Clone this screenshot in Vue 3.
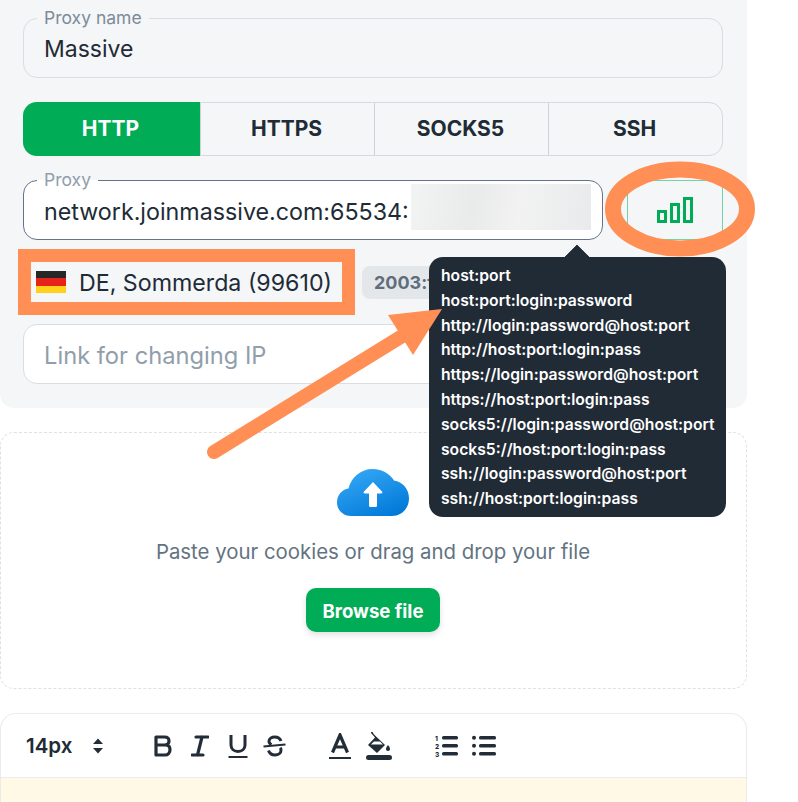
<script setup>
const tabs = ['HTTP', 'HTTPS', 'SOCKS5', 'SSH']
const formats = [
  'host:port',
  'host:port:login:password',
  'http://login:password@host:port',
  'http://host:port:login:pass',
  'https://login:password@host:port',
  'https://host:port:login:pass',
  'socks5://login:password@host:port',
  'socks5://host:port:login:pass',
  'ssh://login:password@host:port',
  'ssh://host:port:login:pass',
]
</script>

<template>
  <div class="page">
    <section class="panel">
      <div class="field name-field">
        <span class="legend">Proxy name</span>
        <span class="value">Massive</span>
      </div>

      <div class="tabs">
        <button v-for="(t, i) in tabs" :key="t" class="tab" :class="{ active: i === 0 }">{{ t }}</button>
      </div>

      <div class="proxy-row">
        <div class="field proxy-field">
          <span class="legend">Proxy</span>
          <span class="value">network.joinmassive.com:65534:</span>
          <span class="blurred"></span>
        </div>
        <button class="check-btn" aria-label="Check proxy">
          <svg width="38" height="28" viewBox="0 0 38 28" fill="none" stroke="#00ad56" stroke-width="3">
            <rect x="1.500" y="14.500" width="7" height="10" />
            <rect x="14.500" y="7.500" width="7" height="17" />
            <rect x="27.500" y="1.500" width="7" height="23" />
          </svg>
        </button>
      </div>

      <div class="location-row">
        <div class="location">
          <span class="flag"><i class="black"></i><i class="red"></i><i class="gold"></i></span>
          <span class="place">DE, Sommerda (99610)</span>
        </div>
        <span class="chip">2003:fa:7f2e:11c0</span>
      </div>

      <div class="field link-field">
        <span class="placeholder">Link for changing IP</span>
      </div>
    </section>

    <section class="dropzone">
      <svg class="cloud" width="72" height="47" viewBox="0 0 72 47">
        <defs>
          <linearGradient id="cloudFill" x1="0.2" y1="0" x2="0.8" y2="1">
            <stop offset="0" stop-color="#35a8f5" />
            <stop offset="1" stop-color="#0078d8" />
          </linearGradient>
        </defs>
        <path fill="url(#cloudFill)" d="M14 47C6 47 0 41 0 33.500C0 26 5 20.500 11.500 19.500C14.500 8 24 0 35.500 0C45.500 0 53.500 5.500 57 11.500C65.500 12.500 72 20 72 29.500C72 39.500 64.500 47 55 47Z" />
        <path fill="#fff" d="M36 13L45 22.500C45.800 23.500 45.300 24.500 44 24.500H40V36.500C40 37.500 39.300 38 38.500 38H33.500C32.700 38 32 37.500 32 36.500V24.500H28C26.700 24.500 26.200 23.500 27 22.500Z" />
      </svg>
      <p class="drop-text">Paste your cookies or drag and drop your file</p>
      <button class="browse">Browse file</button>
    </section>

    <section class="editor">
      <div class="toolbar">
        <div class="size">
          <span>14px</span>
          <svg width="12" height="16" viewBox="0 0 12 16" fill="#232d38">
            <path d="M6 0.500L11 6H1ZM6 15.500L1 10H11Z" />
          </svg>
        </div>
        <div class="group g-format">
          <svg width="18" height="22" viewBox="0 0 18 22" fill="none" stroke="#232d38" stroke-width="3.200" stroke-linejoin="round">
            <path d="M2 2H10.500C13.500 2 15 3.800 15 6C15 8.300 13.500 10 10.500 10H2ZM2 10H11.500C14.500 10 16 12 16 14.500C16 17.500 14.200 20 11 20H2Z" />
          </svg>
          <svg width="18" height="22" viewBox="0 0 18 22" fill="none" stroke="#232d38" stroke-width="3.200" stroke-linecap="round">
            <path d="M5 2H17M1 20H12M11 2L6.500 20" />
          </svg>
          <svg width="20" height="24" viewBox="0 0 20 24" fill="none" stroke="#232d38">
            <path stroke-width="3" d="M3 1V11C3 15 6 17.500 10 17.500C14 17.500 17 15 17 11V1" />
            <path stroke-width="2" d="M0.500 23H19.500" />
          </svg>
          <svg class="strike" width="23" height="22" viewBox="0 0 23 22" fill="none" stroke="#232d38">
            <path stroke-width="3" d="M18 6C17 3.500 14.800 2 11.800 2C8.500 2 6 3.600 6 6.300C6 8 7 9 8.500 9.700M5.500 15.500C6.500 18.500 9 20 12 20C15.500 20 18 18 18 15.200C18 14.200 17.700 13.400 17.200 12.800" />
            <path stroke-width="2" d="M0.500 11.500L22.500 9.500" />
          </svg>
        </div>
        <div class="group g-color">
          <svg width="22" height="26" viewBox="0 0 22 26" fill="none" stroke="#232d38">
            <path stroke-width="3.200" d="M3.500 19.500L11 2L18.500 19.500M6 14H16" />
            <path stroke-width="2" d="M0 25H22" />
          </svg>
          <svg width="26" height="28" viewBox="0 0 26 28" fill="#232d38">
            <path d="M5 0L6.500 0L8 2.500L19 13L11 21L2 13L9 5.500L5 1ZM4.800 12.500H17L14 9.500H8Z" fill-rule="evenodd" />
            <path d="M22 13C23.500 15 24 16 24 17C24 18.300 23.200 19 22 19C20.800 19 20 18.300 20 17C20 16 20.500 15 22 13Z" />
            <rect x="0" y="23" width="26" height="5" rx="2.500" />
          </svg>
        </div>
        <div class="group g-list">
          <svg width="23" height="24" viewBox="0 0 23 24" fill="#232d38">
            <text x="0" y="7" class="num">1</text>
            <text x="0" y="15" class="num">2</text>
            <text x="0" y="23" class="num">3</text>
            <rect x="7" y="2" width="16" height="3.500" rx="1.500" />
            <rect x="7" y="10" width="16" height="3.500" rx="1.500" />
            <rect x="7" y="18" width="16" height="3.500" rx="1.500" />
          </svg>
          <svg width="24" height="24" viewBox="0 0 24 24" fill="#232d38">
            <circle cx="2" cy="3.700" r="2" />
            <circle cx="2" cy="11.700" r="2" />
            <circle cx="2" cy="19.700" r="2" />
            <rect x="7" y="2" width="17" height="3.500" rx="1.500" />
            <rect x="7" y="10" width="17" height="3.500" rx="1.500" />
            <rect x="7" y="18" width="17" height="3.500" rx="1.500" />
          </svg>
        </div>
      </div>
      <div class="editor-body"></div>
    </section>

    <div class="tooltip">
      <div v-for="f in formats" :key="f" class="format">{{ f }}</div>
    </div>

    <svg class="annotations" width="798" height="802" viewBox="0 0 798 802" fill="none">
      <ellipse cx="680" cy="209" rx="67" ry="39.500" stroke="#ff8f54" stroke-width="16" />
      <rect x="24.500" y="255.500" width="324" height="53" stroke="#ff8f54" stroke-width="13" />
      <path d="M214 452L412 330" stroke="#ff8f54" stroke-width="14" stroke-linecap="round" />
      <path d="M388 315L442 309L413 355Z" fill="#ff8f54" />
    </svg>
  </div>
</template>

<style>
html, body { margin: 0; background: #fff; }
</style>

<style scoped>
.page {
  position: relative;
  width: 798px;
  height: 802px;
  overflow: hidden;
  background: #fff;
  font-family: Inter, "Liberation Sans", sans-serif;
  color: #212b36;
}
.panel {
  box-sizing: border-box;
  width: 747px;
  height: 408px;
  padding: 18px 24px 0 23px;
  background: #f4f6f8;
  border-radius: 0 0 14px 14px;
}
.field {
  position: relative;
  box-sizing: border-box;
  height: 60px;
  display: flex;
  align-items: center;
  padding: 2px 20px 0;
  border: 1px solid #dadde1;
  border-radius: 14px;
  font-size: 23px;
}
.legend {
  position: absolute;
  left: 13px;
  top: -10px;
  padding: 0 7px;
  background: #f4f6f8;
  color: #7d8b9a;
  font-size: 17.500px;
  line-height: 18px;
}
.tabs {
  display: flex;
  height: 54px;
  margin-top: 24px;
  border: 1px solid #d6d9dd;
  border-radius: 14px;
  box-sizing: border-box;
}
.tab {
  flex: 1;
  border: 0;
  border-left: 1px solid #cfd3d8;
  background: transparent;
  font: 700 21px Inter, "Liberation Sans", sans-serif;
  color: #212b36;
  padding: 0 2px 2px 0;
}
.tab:first-child { border-left: 0; }
.tab:last-child { border-radius: 0 14px 14px 0; }
.tab.active {
  flex: none;
  width: 177px;
  margin: -1px 0 -1px -1px;
  background: #00ad56;
  color: #fff;
  border-radius: 14px 0 0 14px;
}
.proxy-row {
  display: flex;
  gap: 24px;
  margin-top: 24px;
}
.proxy-field {
  flex: 1;
  background: #fff;
  border-color: #64748b;
  white-space: nowrap;
  font-size: 23.250px;
}
.proxy-field .legend {
  color: #919eab;
  background: linear-gradient(#f4f6f8 50%, #fff 50%);
}
.blurred {
  position: absolute;
  left: 387px;
  top: 3px;
  width: 180px;
  height: 46px;
  background: linear-gradient(100deg, #f2f3f3, #e9eaea 35%, #f1f2f1 60%, #e9eaec);
}
.check-btn {
  box-sizing: border-box;
  width: 96px;
  height: 60px;
  display: flex;
  align-items: center;
  justify-content: center;
  padding: 2px 0 0 2px;
  border: 1px solid #74d3a2;
  background: transparent;
}
.location-row {
  display: flex;
  align-items: center;
  gap: 20px;
  height: 68px;
  margin-top: 8px;
  margin-left: 13px;
  white-space: nowrap;
}
.location {
  display: flex;
  align-items: center;
  gap: 13px;
  width: 306px;
}
.place {
  font-size: 23.200px;
  padding-top: 1px;
}
.flag {
  display: flex;
  flex-direction: column;
  width: 30px;
  height: 22px;
  flex: none;
}
.flag i { flex: 1; }
.black { background: #272727; }
.red { background: #e5231b; }
.gold { background: #ffd11a; }
.chip {
  padding: 0 12px;
  height: 33px;
  line-height: 33px;
  border-radius: 8px;
  background: #e4e7ea;
  color: #5f6d7d;
  font-size: 18px;
  font-weight: 700;
}
.link-field {
  margin-top: 8px;
  padding-top: 3px;
  background: #fff;
  color: #919eab;
  font-size: 23.700px;
}
.dropzone {
  box-sizing: border-box;
  width: 747px;
  height: 257px;
  margin-top: 24px;
  padding: 36px 1px 0 0;
  display: flex;
  flex-direction: column;
  align-items: center;
  border: 1px dashed #dfe1e4;
  border-radius: 14px;
}
.cloud { display: block; }
.drop-text {
  margin: 24px 0 0;
  font-size: 20.400px;
  line-height: 24px;
  color: #637381;
}
.browse {
  margin-top: 24px;
  width: 134px;
  height: 44px;
  padding: 2px 0 0;
  border: 0;
  border-radius: 10px;
  background: #00ad56;
  color: #fff;
  font: 700 18.600px Inter, "Liberation Sans", sans-serif;
  box-shadow: 0 3px 6px rgba(0, 0, 0, 0.12);
}
.editor {
  box-sizing: border-box;
  width: 747px;
  height: 90px;
  margin-top: 24px;
  border: 1px solid #e9ebee;
  border-bottom: 0;
  border-radius: 16px 16px 0 0;
  display: flex;
  flex-direction: column;
}
.toolbar {
  box-sizing: border-box;
  height: 64px;
  flex: none;
  display: flex;
  align-items: center;
  padding-left: 25px;
  border-bottom: 1px solid #e9ebee;
}
.size {
  display: flex;
  align-items: center;
  gap: 20px;
  width: 128px;
  font-size: 20.500px;
  font-weight: 600;
}
.group { display: flex; align-items: center; }
.g-format { gap: 19px; }
.strike { margin-left: -4px; }
.g-color { gap: 15px; margin-left: 43px; }
.g-list { gap: 14px; margin-left: 43px; }
.num { font: 800 6.500px Inter, sans-serif; }
.editor-body { flex: 1; background: #fff9e6; }
.tooltip {
  position: absolute;
  left: 429px;
  top: 257px;
  box-sizing: border-box;
  width: 297px;
  height: 260px;
  padding: 7px 0 0 12px;
  border-radius: 14px;
  background: #212b36;
  color: #fff;
  font-size: 15.700px;
  font-weight: 600;
  line-height: 24.800px;
  white-space: nowrap;
}
.tooltip::before {
  content: "";
  position: absolute;
  left: 139px;
  top: -9px;
  width: 18px;
  height: 18px;
  background: #212b36;
  transform: rotate(45deg);
  clip-path: polygon(0 0, 100% 0, 0 100%);
}
.annotations {
  position: absolute;
  left: 0;
  top: 0;
  pointer-events: none;
}
</style>
